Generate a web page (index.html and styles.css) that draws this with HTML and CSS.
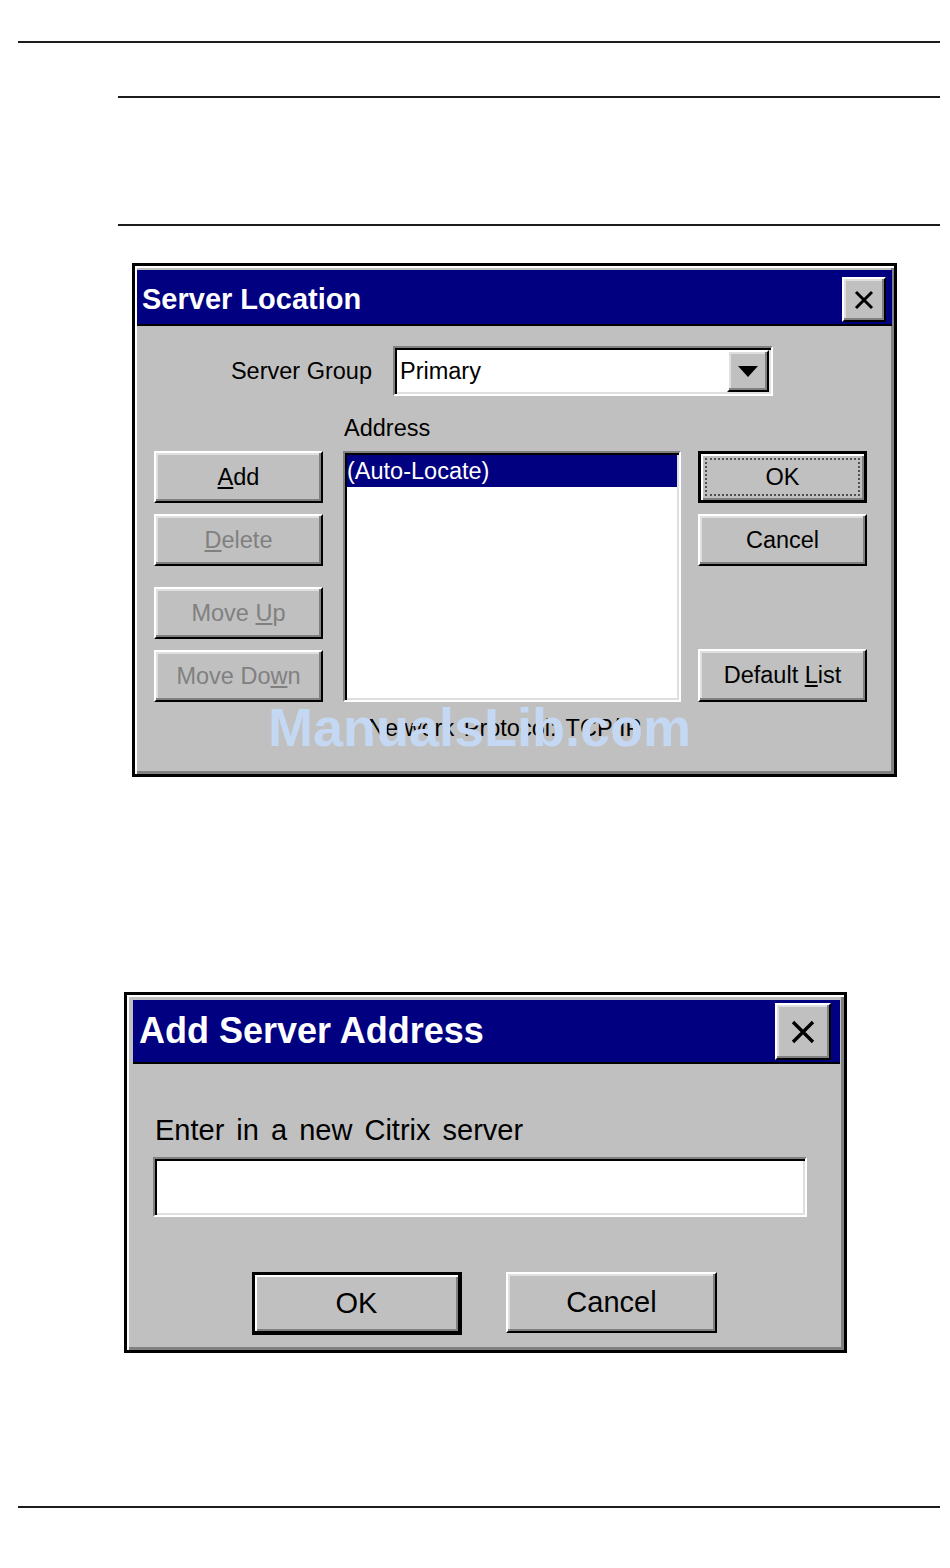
FILE: index.html
```html
<!DOCTYPE html>
<html>
<head>
<meta charset="utf-8">
<link rel="stylesheet" href="styles.css">
</head>
<body>
<div class="page">
  <div class="rule rule-top"></div>
  <div class="rule rule-mid1"></div>
  <div class="rule rule-mid2"></div>

  <div class="dialog d1">
    <div class="titlebar tb1">
      <span class="title t1">Server Location</span>
      <button class="close close1 raised"><svg width="20" height="20" viewBox="0 0 20 20"><path d="M2 2L18 18M18 2L2 18" stroke="#000" stroke-width="3" fill="none"/></svg></button>
    </div>
    <div class="d1-body">
      <div class="group-row">
        <span class="group-label">Server Group</span>
        <div class="combo sunken">
          <span class="combo-text">Primary</span>
          <span class="drop raised"><svg width="20" height="11" viewBox="0 0 20 11"><path d="M0 0H20L10 11Z" fill="#000"/></svg></span>
        </div>
      </div>
      <div class="addr-label">Address</div>
      <div class="main-row">
        <div class="btn-col">
          <button class="btn raised"><span><u>A</u>dd</span></button>
          <button class="btn raised disabled"><span><u>D</u>elete</span></button>
          <button class="btn raised disabled sep"><span>Move <u>U</u>p</span></button>
          <button class="btn raised disabled"><span>Move Do<u>w</u>n</span></button>
        </div>
        <div class="listbox sunken">
          <div class="list-item selected">(Auto-Locate)</div>
        </div>
        <div class="btn-col right">
          <button class="btn default"><span class="focus">OK</span></button>
          <button class="btn raised"><span>Cancel</span></button>
          <button class="btn raised push-bottom"><span>Default <u>L</u>ist</span></button>
        </div>
      </div>
      <div class="net">Network Protocol: TCP/IP</div>
      <div class="watermark">ManualsLib.com</div>
    </div>
  </div>

  <div class="dialog d2">
    <div class="titlebar tb2">
      <span class="title t2">Add Server Address</span>
      <button class="close close2 raised"><svg width="24" height="24" viewBox="0 0 24 24"><path d="M2 2L22 22M22 2L2 22" stroke="#000" stroke-width="3.4" fill="none"/></svg></button>
    </div>
    <div class="d2-body">
      <div class="prompt">Enter in a new Citrix server</div>
      <div class="textbox sunken"></div>
      <div class="btn-row">
        <button class="btn2 default2"><span>OK</span></button>
        <button class="btn2 raised"><span>Cancel</span></button>
      </div>
    </div>
  </div>

  <div class="rule rule-bottom"></div>
</div>
</body>
</html>
```
FILE: styles.css
```css
* { box-sizing: border-box; }

body {
  margin: 0;
  background: #fff;
  font-family: "Liberation Sans", Arial, sans-serif;
  color: #000;
}

.page {
  width: 950px;
  padding-top: 41px;
  padding-bottom: 40px;
}

.rule {
  height: 2px;
  background: #1c1c1c;
  margin-right: 10px;
}
.rule-top { margin-left: 18px; }
.rule-mid1 { margin-left: 118px; margin-top: 53px; }
.rule-mid2 { margin-left: 118px; margin-top: 126px; }
.rule-bottom { margin-left: 18px; margin-top: 153px; }

/* 3D bevels */
.raised {
  background: #c0c0c0;
  border: 2px solid;
  border-color: #fff #000 #000 #fff;
  box-shadow: inset -2px -2px #808080, inset 2px 2px #dfdfdf;
}
.sunken {
  background: #fff;
  border: 2px solid;
  border-color: #808080 #fff #fff #808080;
  box-shadow: inset 2px 2px #000, inset -2px -2px #dfdfdf;
}

.dialog {
  border: 3px solid #000;
  background: #c0c0c0;
  box-shadow: inset 2px 2px #fff, inset -3px -3px #808080;
}

.titlebar {
  background: #000080;
  border-bottom: 2px solid #000;
  display: flex;
  justify-content: space-between;
  align-items: flex-start;
}
.title {
  color: #fff;
  font-weight: bold;
  white-space: nowrap;
}
.close {
  padding: 0;
  margin: 0;
  display: flex;
  align-items: center;
  justify-content: center;
}

/* Dialog 1 */
.d1 {
  margin: 37px 0 0 132px;
  width: 765px;
  height: 514px;
  padding: 4px 2px 0 2px;
}
.tb1 {
  height: 56px;
  padding: 0 6px 0 5px;
}
.t1 {
  font-size: 29px;
  line-height: 32px;
  margin-top: 13px;
}
.close1 {
  width: 44px;
  height: 45px;
  margin-top: 7px;
}

.d1-body {
  position: relative;
  font-size: 23.5px;
}
.group-row {
  display: flex;
  align-items: center;
  margin-top: 20px;
}
.group-label {
  width: 235px;
  text-align: right;
  white-space: nowrap;
}
.combo {
  margin-left: 21px;
  width: 380px;
  height: 50px;
  padding: 2px;
  display: flex;
  align-items: center;
  justify-content: space-between;
}
.combo-text {
  padding-left: 3px;
  line-height: 28px;
}
.drop {
  width: 42px;
  height: 42px;
  display: flex;
  align-items: center;
  justify-content: center;
}
.addr-label {
  margin: 18px 0 0 207px;
  line-height: 28px;
}
.main-row {
  display: flex;
  margin-top: 9px;
  height: 251px;
}
.btn-col {
  display: flex;
  flex-direction: column;
  gap: 11px;
  width: 169px;
  margin-left: 17px;
}
.btn {
  font: inherit;
  color: #000;
  width: 169px;
  height: 52px;
  padding: 0;
  margin: 0;
  display: flex;
  align-items: center;
  justify-content: center;
  white-space: nowrap;
}
.btn.disabled { color: #808080; }
.btn.sep { margin-top: 10px; }
.btn.push-bottom { margin-top: auto; height: 53px; }
.btn.default {
  background: #c0c0c0;
  border: 3px solid #000;
  box-shadow: inset 2px 2px #fff, inset -2px -2px #808080;
  padding: 4px;
}
.focus {
  flex: 1;
  align-self: stretch;
  display: flex;
  align-items: center;
  justify-content: center;
  border: 2px dotted #505050;
}
.listbox {
  margin-left: 20px;
  width: 338px;
  height: 251px;
  padding: 2px;
}
.list-item {
  height: 32px;
  line-height: 32px;
  white-space: nowrap;
}
.list-item.selected {
  background: #000080;
  color: #fff;
}
.net {
  margin: 12px 0 0 231px;
  line-height: 28px;
  white-space: nowrap;
  word-spacing: 3px;
}
.watermark {
  position: absolute;
  left: 131px;
  top: 354px;
  font-size: 54px;
  line-height: 54px;
  font-weight: bold;
  color: #c4d8f4;
  white-space: nowrap;
}

/* Dialog 2 */
.d2 {
  margin: 215px 0 0 124px;
  width: 723px;
  height: 361px;
  padding: 5px 4px 0 6px;
}
.tb2 {
  height: 64px;
  padding: 0 9px 0 6px;
}
.t2 {
  font-size: 36px;
  line-height: 40px;
  margin-top: 11px;
}
.close2 {
  width: 56px;
  height: 57px;
  margin-top: 3px;
}
.d2-body {
  font-size: 29px;
}
.prompt {
  margin: 49px 0 0 22px;
  line-height: 34px;
  word-spacing: 4px;
  white-space: nowrap;
}
.textbox {
  margin: 10px 0 0 20px;
  width: 654px;
  height: 60px;
}
.btn-row {
  display: flex;
  align-items: flex-start;
  margin-top: 55px;
}
.btn2 {
  font: inherit;
  color: #000;
  padding: 0;
  margin: 0;
  display: flex;
  align-items: center;
  justify-content: center;
}
.default2 {
  margin-left: 119px;
  width: 210px;
  height: 63px;
  background: #c0c0c0;
  border: 3px solid #000;
  border-bottom-width: 4px;
  border-right-width: 4px;
  box-shadow: inset 2px 2px #fff, inset -2px -2px #808080;
}
.btn2.raised {
  margin-left: 44px;
  width: 211px;
  height: 61px;
}
```
